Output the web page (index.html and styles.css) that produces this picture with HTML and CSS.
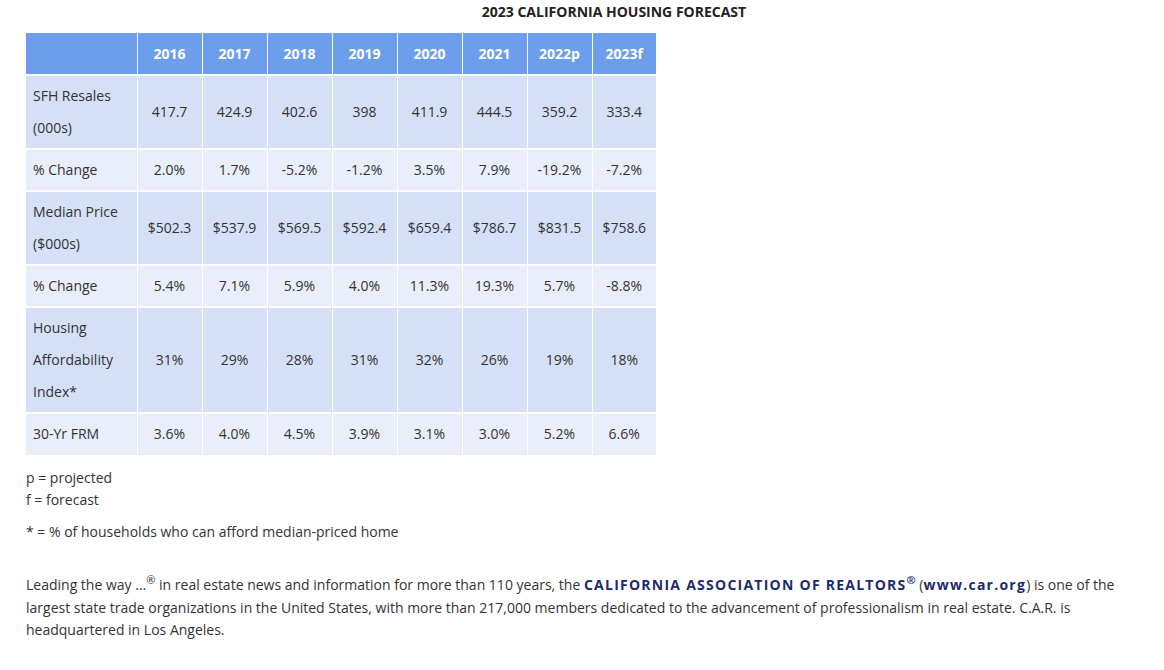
FILE: index.html
```html
<!DOCTYPE html>
<html lang="en">
<head>
<meta charset="utf-8">
<title>2023 California Housing Forecast</title>
<link rel="stylesheet" href="styles.css">
</head>
<body>
<div class="page">
  <h1 class="title">2023 CALIFORNIA HOUSING FORECAST</h1>
  <table class="forecast">
    <thead>
      <tr>
        <th class="label"></th>
        <th>2016</th><th>2017</th><th>2018</th><th>2019</th><th>2020</th><th>2021</th><th>2022p</th><th>2023f</th>
      </tr>
    </thead>
    <tbody>
      <tr class="dark">
        <td class="label">SFH Resales<br>(000s)</td>
        <td>417.7</td><td>424.9</td><td>402.6</td><td>398</td><td>411.9</td><td>444.5</td><td>359.2</td><td>333.4</td>
      </tr>
      <tr class="light">
        <td class="label">% Change</td>
        <td>2.0%</td><td>1.7%</td><td>-5.2%</td><td>-1.2%</td><td>3.5%</td><td>7.9%</td><td>-19.2%</td><td>-7.2%</td>
      </tr>
      <tr class="dark">
        <td class="label">Median Price<br>($000s)</td>
        <td>$502.3</td><td>$537.9</td><td>$569.5</td><td>$592.4</td><td>$659.4</td><td>$786.7</td><td>$831.5</td><td>$758.6</td>
      </tr>
      <tr class="light">
        <td class="label">% Change</td>
        <td>5.4%</td><td>7.1%</td><td>5.9%</td><td>4.0%</td><td>11.3%</td><td>19.3%</td><td>5.7%</td><td>-8.8%</td>
      </tr>
      <tr class="dark">
        <td class="label">Housing<br>Affordability<br>Index*</td>
        <td>31%</td><td>29%</td><td>28%</td><td>31%</td><td>32%</td><td>26%</td><td>19%</td><td>18%</td>
      </tr>
      <tr class="light">
        <td class="label">30-Yr FRM</td>
        <td>3.6%</td><td>4.0%</td><td>4.5%</td><td>3.9%</td><td>3.1%</td><td>3.0%</td><td>5.2%</td><td>6.6%</td>
      </tr>
    </tbody>
  </table>
  <p class="notes">p = projected<br>f = forecast</p>
  <p class="notes">* = % of households who can afford median-priced home</p>
  <p class="about">Leading the way ...<sup>®</sup> in real estate news and information for more than 110 years, the <strong class="brand">CALIFORNIA ASSOCIATION OF REALTORS<sup>®</sup></strong> (<strong class="brand">www.car.org</strong>) is one of the largest state trade organizations in the United States, with more than 217,000 members dedicated to the advancement of professionalism in real estate. C.A.R. is headquartered in Los Angeles.</p>
</div>
</body>
</html>
```

FILE: styles.css
```css
html, body {
  margin: 0;
  padding: 0;
  background: #ffffff;
}

body {
  font-family: "Open Sans", "Liberation Sans", sans-serif;
  font-size: 14px;
  color: #333333;
}

.page {
  width: 1112px;
  padding: 0 0 0 26px;
}

.title {
  margin: 0;
  padding: 2px 0 0 64px;
  height: 33px;
  box-sizing: border-box;
  text-align: center;
  font-size: 14px;
  font-weight: 700;
  line-height: 19px;
  color: #222222;
}

.forecast {
  width: 630px;
  table-layout: fixed;
  border-collapse: collapse;
  margin: 0;
}

.forecast th,
.forecast td {
  width: 65px;
  padding: 4px 0;
  line-height: 32px;
  text-align: center;
  vertical-align: middle;
  border-right: 1px solid #ffffff;
  border-bottom: 2px solid #ffffff;
  box-sizing: border-box;
  font-size: 14px;
}

.forecast th:last-child,
.forecast td:last-child {
  border-right: 0;
  width: 64px;
}

.forecast th {
  background: #6d9eeb;
  color: #ffffff;
  font-weight: 700;
  padding-top: 5px;
}

.forecast tbody tr:last-child td {
  padding-bottom: 5px;
}

.forecast .label {
  width: 111px;
  text-align: left;
  padding-left: 7px;
}

.dark td {
  background: #d5dff6;
}

.light td {
  background: #e9eefa;
}

.notes {
  margin: 10px 0 0;
  line-height: 22px;
}

.about {
  margin: 31px 0 0;
  line-height: 22.5px;
}

.about sup {
  font-size: 11px;
  line-height: 0;
  letter-spacing: 0;
}

.brand {
  color: #1c2c6b;
  font-weight: 700;
  letter-spacing: 1.25px;
}
```
